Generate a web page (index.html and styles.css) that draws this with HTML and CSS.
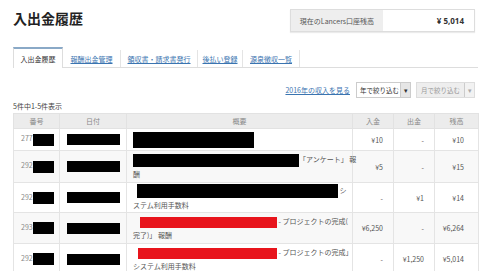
FILE: index.html
```html
<!DOCTYPE html>
<html lang="ja">
<head>
    <meta charset="UTF-8">
    <meta name="viewport" content="width=device-width, initial-scale=1.0">
    <title>入出金履歴</title>
    <link rel="stylesheet" href="styles.css">
</head>
<body>
    <header class="page-head">
        <h1>入出金履歴</h1>
        <div class="balance">
            <div class="balance-label">現在のLancers口座残高</div>
            <div class="balance-value">¥ 5,014</div>
        </div>
    </header>
    <nav class="tabs">
        <span class="tab active">入出金履歴</span>
        <a class="tab" href="#">報酬出金管理</a>
        <a class="tab" href="#">領収書・請求書発行</a>
        <a class="tab" href="#">後払い登録</a>
        <a class="tab" href="#">源泉徴収一覧</a>
    </nav>
    <div class="filters">
        <a class="year-link" href="#">2016年の収入を見る</a>
        <div class="select">
            <span class="select-text">年で絞り込む</span>
            <span class="select-btn">▾</span>
        </div>
        <div class="select disabled">
            <span class="select-text">月で絞り込む</span>
            <span class="select-btn">▾</span>
        </div>
    </div>
    <p class="count">5件中1-5件表示</p>
    <table class="history">
        <colgroup>
            <col style="width:46px">
            <col style="width:67px">
            <col style="width:226px">
            <col style="width:41px">
            <col style="width:41px">
            <col style="width:44px">
        </colgroup>
        <thead>
            <tr><th>番号</th><th>日付</th><th>概要</th><th>入金</th><th>出金</th><th>残高</th></tr>
        </thead>
        <tbody>
            <tr class="r1">
                <td class="num">277<span class="mask m-num"></span></td>
                <td><span class="mask m-date"></span></td>
                <td class="desc"><span class="mask" style="width:121px;height:16px"></span></td>
                <td class="amt">¥10</td>
                <td class="amt">-</td>
                <td class="amt bal">¥10</td>
            </tr>
            <tr class="r2">
                <td class="num">292<span class="mask m-num"></span></td>
                <td><span class="mask m-date"></span></td>
                <td class="desc">
                    <div class="line"><span class="mask" style="width:166px;height:13px"></span>「アンケート」 報</div>
                    <div class="line">酬</div>
                </td>
                <td class="amt">¥5</td>
                <td class="amt">-</td>
                <td class="amt bal">¥15</td>
            </tr>
            <tr class="r3">
                <td class="num">292<span class="mask m-num"></span></td>
                <td><span class="mask m-date"></span></td>
                <td class="desc">
                    <div class="line"><span class="mask" style="width:201px;height:14px;margin-left:4px"></span> シ</div>
                    <div class="line">ステム利用手数料</div>
                </td>
                <td class="amt">-</td>
                <td class="amt">¥1</td>
                <td class="amt bal">¥14</td>
            </tr>
            <tr class="r4">
                <td class="num">293<span class="mask m-num"></span></td>
                <td><span class="mask m-date"></span></td>
                <td class="desc">
                    <div class="line"><span class="mask red" style="width:137px;height:11px;margin-left:7px"></span> - プロジェクトの完成(</div>
                    <div class="line">完了)」 報酬</div>
                </td>
                <td class="amt">¥6,250</td>
                <td class="amt">-</td>
                <td class="amt bal">¥6,264</td>
            </tr>
            <tr class="r5">
                <td class="num">292<span class="mask m-num"></span></td>
                <td><span class="mask m-date"></span></td>
                <td class="desc">
                    <div class="line"><span class="mask red" style="width:139px;height:11px;margin-left:5px"></span> - プロジェクトの完成」</div>
                    <div class="line">システム利用手数料</div>
                </td>
                <td class="amt">-</td>
                <td class="amt">¥1,250</td>
                <td class="amt bal">¥5,014</td>
            </tr>
        </tbody>
    </table>
</body>
</html>
```
FILE: styles.css
```css
body {
    margin: 0;
    padding: 10px 2px 0 13px;
    font-family: "Noto Sans CJK JP", "Open Sans", sans-serif;
    color: #444;
    background-color: #fff;
    font-size: 7px;
}
a {
    color: #3a74b0;
}
.page-head {
    display: flex;
    justify-content: space-between;
    align-items: flex-start;
    height: 37px;
}
.page-head h1 {
    margin: 0;
    font-size: 14px;
    line-height: 17px;
    font-weight: bold;
    color: #222;
}
.balance {
    display: flex;
    width: 185px;
    height: 23px;
    margin-top: -1px;
    margin-right: 3px;
    border: 1px solid #ddd;
    box-sizing: border-box;
    box-shadow: 0 1px 1px rgba(0, 0, 0, 0.08);
}
.balance-label {
    width: 92px;
    background-color: #eee;
    color: #555;
    display: flex;
    align-items: center;
    justify-content: center;
}
.balance-value {
    flex: 1;
    text-align: right;
    padding-right: 10px;
    font-family: "Open Sans", sans-serif;
    font-weight: bold;
    font-size: 8px;
    line-height: 21px;
    color: #333;
}
.tabs {
    display: flex;
    height: 20px;
    border-bottom: 1px solid #ddd;
}
.tab {
    display: flex;
    align-items: center;
    justify-content: center;
    box-sizing: border-box;
    border-right: 1px solid #e4e4e4;
    margin-top: 3px;
    height: 17px;
}
.tab.active {
    margin-top: 0;
    height: 21px;
    width: 50px;
    background-color: #fff;
    border: 1px solid #ddd;
    border-top: 2px solid #8aa9c7;
    border-bottom: none;
    color: #333;
}
.tabs a:nth-child(2) { width: 58px; }
.tabs a:nth-child(3) { width: 77px; }
.tabs a:nth-child(4) { width: 45px; }
.tabs a:nth-child(5) { width: 57px; }
.filters {
    display: flex;
    justify-content: flex-end;
    align-items: center;
    gap: 5px;
    margin-top: 14px;
    padding-right: 3px;
    height: 16px;
}
.year-link {
    margin-right: 1px;
}
.select {
    display: flex;
    height: 16px;
    border: 1px solid #ccc;
    box-sizing: border-box;
    align-items: stretch;
    font-size: 6.5px;
}
.select-text {
    width: 40px;
    display: flex;
    align-items: center;
    padding-left: 3px;
    color: #333;
    white-space: nowrap;
}
.select-btn {
    width: 9px;
    display: flex;
    align-items: center;
    justify-content: center;
    background-color: #e6e6e6;
    border-left: 1px solid #ccc;
    color: #333;
    font-size: 7px;
}
.select.disabled {
    background-color: #eee;
    border-color: #ddd;
}
.select.disabled .select-text {
    color: #999;
    width: 43px;
    padding-left: 4px;
}
.select.disabled .select-btn {
    background-color: #f2f2f2;
    color: #aaa;
}
.count {
    margin: 2px 0 0;
    line-height: 12px;
    color: #444;
}
.history {
    width: 465px;
    border-collapse: collapse;
    table-layout: fixed;
    margin-top: 1px;
}
.history th {
    background-color: #ececec;
    color: #888;
    font-weight: normal;
    height: 14px;
    padding: 0;
    border: 1px solid #e2e2e2;
}
.history td {
    border: 1px solid #e4e4e4;
    padding: 0;
    vertical-align: middle;
    color: #555;
    text-align: center;
}
.history tbody tr:nth-child(even) td {
    background-color: #f8f8f8;
}
.r1 td { height: 21px; }
.r2 td { height: 31px; }
.r3 td { height: 28px; }
.r4 td { height: 30px; }
.r5 td { height: 30px; }
.history td.num {
    text-align: left;
    padding-left: 7px;
    color: #888;
}
.mask {
    display: inline-block;
    background-color: #000;
    vertical-align: middle;
}
.mask.red {
    background-color: #e8141c;
}
.m-num {
    width: 21px;
    height: 12px;
}
.m-date {
    width: 53px;
    height: 11px;
}
.history td.desc {
    text-align: left;
    padding-left: 6px;
}
.desc .line {
    line-height: 14px;
    white-space: nowrap;
}
.history td.amt {
    text-align: right;
    padding-right: 10px;
}
.history td.bal {
    padding-right: 14px;
}
```
